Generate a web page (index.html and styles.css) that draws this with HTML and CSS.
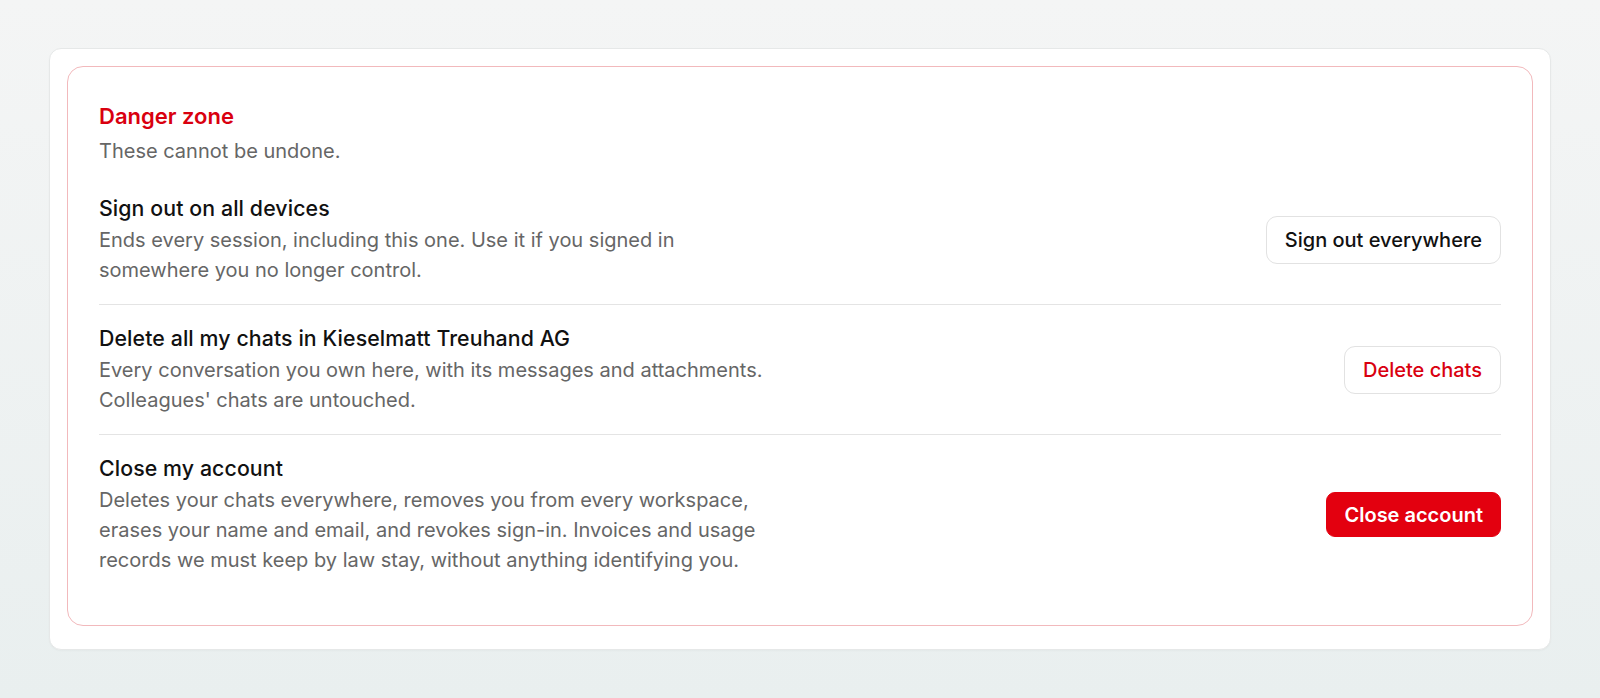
FILE: index.html
```html
<!DOCTYPE html>
<html lang="en">
<head>
<meta charset="utf-8">
<title>Danger zone</title>
<link rel="stylesheet" href="styles.css">
</head>
<body>
<main class="page">
  <section class="card">
    <div class="danger">
      <header class="danger-head">
        <h2 class="danger-title">Danger zone</h2>
        <p class="danger-sub">These cannot be undone.</p>
      </header>
      <div class="row">
        <div class="row-text">
          <h3 class="row-title">Sign out on all devices</h3>
          <p class="row-desc">Ends every session, including this one. Use it if you signed in somewhere you no longer control.</p>
        </div>
        <button class="btn btn-outline">Sign out everywhere</button>
      </div>
      <div class="row">
        <div class="row-text">
          <h3 class="row-title">Delete all my chats in Kieselmatt Treuhand AG</h3>
          <p class="row-desc">Every conversation you own here, with its messages and attachments. Colleagues' chats are untouched.</p>
        </div>
        <button class="btn btn-outline btn-red-text">Delete chats</button>
      </div>
      <div class="row">
        <div class="row-text">
          <h3 class="row-title">Close my account</h3>
          <p class="row-desc">Deletes your chats everywhere, removes you from every workspace, erases your name and email, and revokes sign-in. Invoices and usage records we must keep by law stay, without anything identifying you.</p>
        </div>
        <button class="btn btn-danger">Close account</button>
      </div>
    </div>
  </section>
</main>
</body>
</html>
```
FILE: styles.css
```css
* { box-sizing: border-box; }
html, body { margin: 0; padding: 0; }
body {
  min-height: 698px;
  background: linear-gradient(180deg, #f4f5f5 0%, #e9efef 100%);
  font-family: Inter, "Noto Sans", "Liberation Sans", sans-serif;
  color: #111;
}
.page {
  padding: 48px 49px;
}
.card {
  background: #fff;
  border: 1px solid #e6e8e8;
  border-radius: 12px;
  padding: 17px 17px 23px;
  box-shadow: 0 1px 2px rgba(0,0,0,0.03);
}
.danger {
  border: 1px solid #f2b9bc;
  border-radius: 16px;
  padding: 34px 31px 31px 31px;
}
.danger-head {
  margin-bottom: 9px;
}
.danger-title {
  margin: 0;
  font-size: 22px;
  line-height: 30px;
  font-weight: 600;
  color: #d9000f;
}
.danger-sub {
  margin: 5px 0 0;
  font-size: 20px;
  line-height: 30px;
  color: #666;
}
.row {
  display: flex;
  align-items: center;
  justify-content: space-between;
  gap: 24px;
  padding: 19px 0;
}
.row + .row {
  border-top: 1px solid #e4e4e4;
}
.row-text {
  max-width: 664px;
}
.row-title {
  margin: 0;
  font-size: 21.3px;
  line-height: 28px;
  font-weight: 500;
  letter-spacing: 0.1px;
  color: #111;
}
.row-desc {
  margin: 3px 0 0;
  font-size: 20px;
  line-height: 30px;
  color: #666;
}
.btn {
  flex: none;
  font-family: inherit;
  font-size: 20px;
  font-weight: 500;
  border-radius: 11px;
  cursor: pointer;
}
.btn-outline {
  background: #fff;
  border: 1px solid #e2e2e2;
  color: #111;
  height: 48px;
  padding: 0 18px;
}
.btn-red-text {
  color: #d9000f;
}
.btn-danger {
  background: #e3000f;
  border: 1px solid #e3000f;
  color: #fff;
  font-weight: 600;
  height: 45px;
  padding: 0 17px;
  border-radius: 9px;
}
```
